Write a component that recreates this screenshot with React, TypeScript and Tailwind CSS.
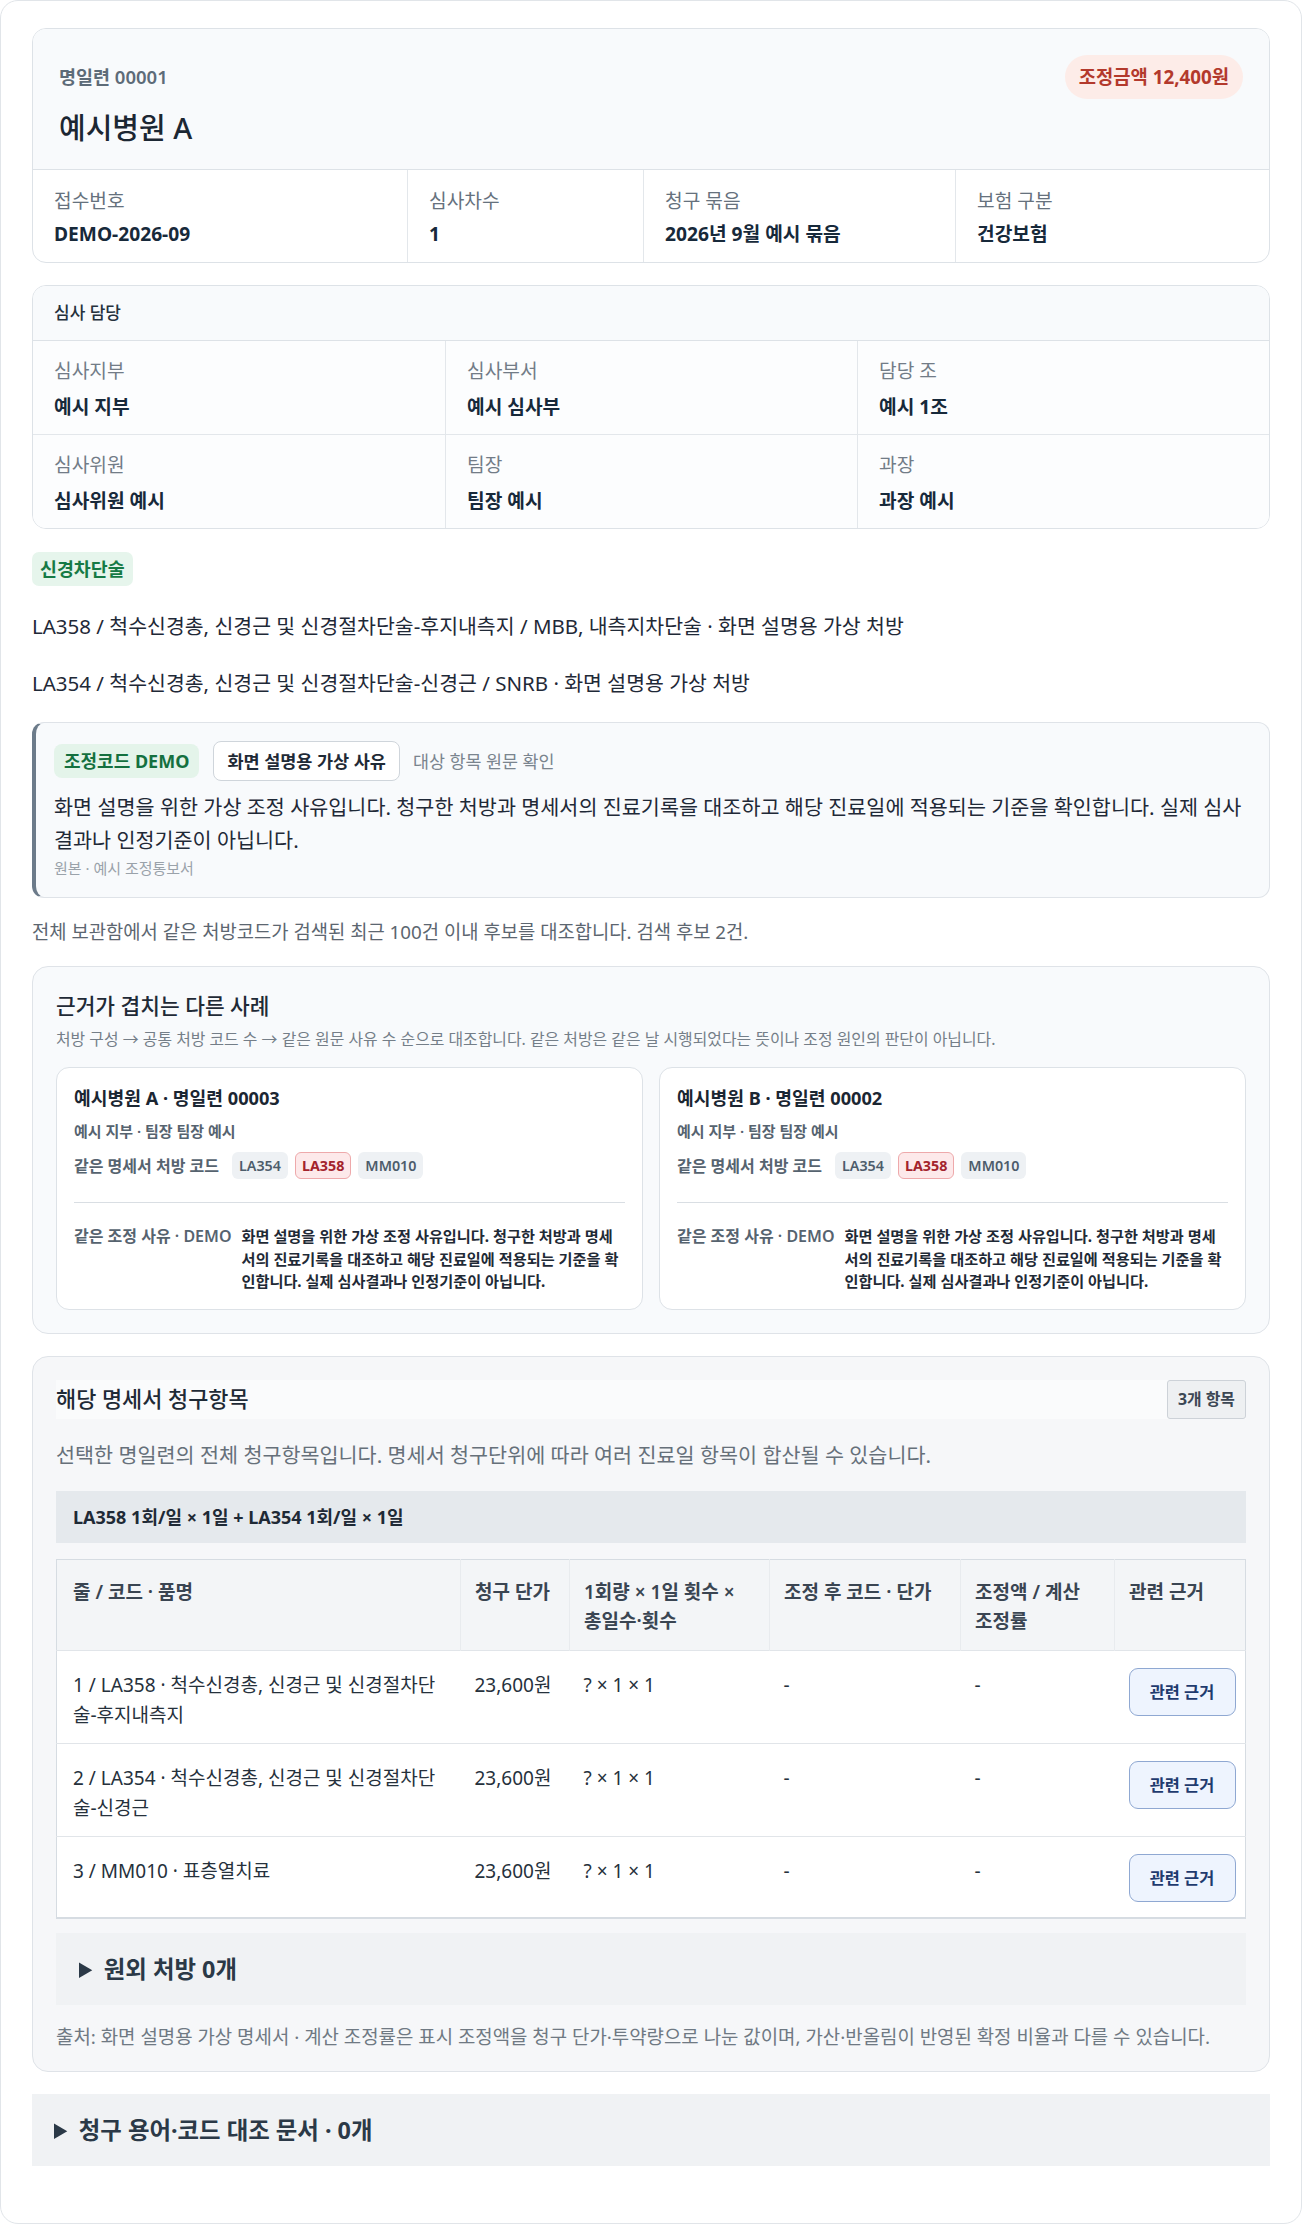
const FONT = "font-['Noto_Sans','Noto_Sans_CJK_KR',sans-serif]";

const claimInfo = [
  { label: "접수번호", value: "DEMO-2026-09" },
  { label: "심사차수", value: "1" },
  { label: "청구 묶음", value: "2026년 9월 예시 묶음" },
  { label: "보험 구분", value: "건강보험" },
];

const reviewers = [
  { label: "심사지부", value: "예시 지부" },
  { label: "심사부서", value: "예시 심사부" },
  { label: "담당 조", value: "예시 1조" },
  { label: "심사위원", value: "심사위원 예시" },
  { label: "팀장", value: "팀장 예시" },
  { label: "과장", value: "과장 예시" },
];

const similarCases = [
  { title: "예시병원 A · 명일련 00003", sub: "예시 지부 · 팀장 팀장 예시" },
  { title: "예시병원 B · 명일련 00002", sub: "예시 지부 · 팀장 팀장 예시" },
];

const reasonText =
  "화면 설명을 위한 가상 조정 사유입니다. 청구한 처방과 명세서의 진료기록을 대조하고 해당 진료일에 적용되는 기준을 확인합니다. 실제 심사결과나 인정기준이 아닙니다.";

const rows = [
  { name: "1 / LA358 · 척수신경총, 신경근 및 신경절차단술-후지내측지", price: "23,600원" },
  { name: "2 / LA354 · 척수신경총, 신경근 및 신경절차단술-신경근", price: "23,600원" },
  { name: "3 / MM010 · 표층열치료", price: "23,600원" },
];

const headers = ["줄 / 코드 · 품명", "청구 단가", "1회량 × 1일 횟수 × 총일수·횟수", "조정 후 코드 · 단가", "조정액 / 계산 조정률", "관련 근거"];

function CodeChip({ code, hit }: { code: string; hit?: boolean }) {
  return hit ? (
    <span className="flex h-[27px] items-center rounded-md border border-[#eea9ab] bg-[#fde9ea] px-[6px] text-[14.3px] font-bold text-[#a3232c]">
      {code}
    </span>
  ) : (
    <span className="flex h-[27px] items-center rounded-md border border-transparent bg-[#eef1f4] px-[6px] text-[14.3px] font-semibold text-[#4d5c6b]">
      {code}
    </span>
  );
}

export default function App() {
  return (
    <div className={`${FONT} min-h-[2225px] bg-white text-[#1f2937]`}>
      <div className="rounded-[18px] border border-[#e1e5e9] bg-white px-[31px] pb-[57px] pt-[27px]">
        {/* 명일련 헤더 */}
        <section className="overflow-hidden rounded-[14px] border border-[#dde2e7]">
          <div className="bg-[#f8fafc] px-[26px] pb-[24px] pt-[26px]">
            <div className="flex items-center justify-between">
              <span className="text-[18.5px] font-semibold text-[#5d6b78]">명일련 00001</span>
              <span className="flex h-[44px] items-center rounded-full bg-[#fdece8] px-[14px] text-[18.8px] font-bold text-[#b3392c]">
                조정금액 12,400원
              </span>
            </div>
            <h1 className="mt-[12px] text-[29px] font-medium leading-[34px] text-[#1c2733]">예시병원 A</h1>
          </div>
          <div className="grid grid-cols-[374px_236px_312px_1fr] border-t border-[#dde2e7]">
            {claimInfo.map((c, i) => (
              <div
                key={c.label}
                className={`px-[21px] pb-[16px] pt-[19px] ${i > 0 ? "border-l border-[#e3e7eb]" : ""}`}
              >
                <div className="text-[19.2px] leading-[24px] text-[#66717d]">{c.label}</div>
                <div className="mt-[9px] text-[19.2px] font-bold leading-[24px] text-[#17293a]">{c.value}</div>
              </div>
            ))}
          </div>
        </section>

        {/* 심사 담당 */}
        <section className="mt-[22px] overflow-hidden rounded-[14px] border border-[#dde2e7]">
          <div className="border-b border-[#dde2e7] bg-[#f8fafc] px-[21px] py-[15px] text-[17px] font-medium leading-[24px] text-[#25313d]">
            심사 담당
          </div>
          <div className="grid grid-cols-3 bg-[#fcfdfe]">
            {reviewers.map((r, i) => (
              <div
                key={r.label}
                className={`px-[21px] pb-[15px] pt-[18px] ${i % 3 > 0 ? "border-l border-[#e3e7eb]" : ""} ${
                  i > 2 ? "border-t border-[#e3e7eb]" : ""
                }`}
              >
                <div className="text-[19.2px] leading-[24px] text-[#727c87]">{r.label}</div>
                <div className="mt-[12px] text-[19.2px] font-bold leading-[24px] text-[#17293a]">{r.value}</div>
              </div>
            ))}
          </div>
        </section>

        {/* 처방 분류 */}
        <div className="mt-[23px] flex">
          <span className="flex h-[34px] items-center rounded-[7px] bg-[#e6f5ec] px-[8px] text-[18.4px] font-bold text-[#167a45]">
            신경차단술
          </span>
        </div>
        <p className="mt-[26px] text-[20.5px] leading-[28px] text-[#1f2937]">
          LA358 / 척수신경총, 신경근 및 신경절차단술-후지내측지 / MBB, 내측지차단술 · 화면 설명용 가상 처방
        </p>
        <p className="mt-[29px] text-[20.5px] leading-[28px] text-[#1f2937]">
          LA354 / 척수신경총, 신경근 및 신경절차단술-신경근 / SNRB · 화면 설명용 가상 처방
        </p>

        {/* 조정 사유 */}
        <section className="mt-[25px] rounded-[12px] border border-l-4 border-[#dfe3e8] border-l-[#6c7b8a] bg-[#f8fafc] pb-[19px] pl-[18px] pr-[16px] pt-[18px]">
          <div className="flex items-center">
            <span className="flex h-[34px] items-center rounded-[8px] bg-[#e4f4ea] px-[10px] text-[18px] font-bold text-[#14703f]">
              조정코드 DEMO
            </span>
            <span className="ml-[14px] flex h-[40px] items-center rounded-[8px] border border-[#cfd5db] bg-white px-[13px] text-[17.5px] font-bold text-[#1f2a36]">
              화면 설명용 가상 사유
            </span>
            <span className="ml-[13px] text-[17.4px] text-[#7a848e]">대상 항목 원문 확인</span>
          </div>
          <p className="mt-[10px] text-[20.7px] leading-[33px] text-[#1f2937]">{reasonText}</p>
          <p className="mt-[1px] text-[15px] leading-[20px] text-[#9aa2aa]">원본 · 예시 조정통보서</p>
        </section>

        <p className="mt-[21px] text-[18.8px] leading-[26px] text-[#5c6670]">
          전체 보관함에서 같은 처방코드가 검색된 최근 100건 이내 후보를 대조합니다. 검색 후보 2건.
        </p>

        {/* 근거가 겹치는 다른 사례 */}
        <section className="mt-[21px] rounded-[16px] border border-[#dfe3e8] bg-[#f8fafc] px-[23px] pb-[23px] pt-[24px]">
          <h2 className="text-[21.4px] font-medium leading-[30px] text-[#1f2a36]">근거가 겹치는 다른 사례</h2>
          <p className="mt-[7px] text-[15.9px] leading-[22px] text-[#747e88]">
            처방 구성 → 공통 처방 코드 수 → 같은 원문 사유 수 순으로 대조합니다. 같은 처방은 같은 날 시행되었다는 뜻이나 조정
            원인의 판단이 아닙니다.
          </p>
          <div className="mt-[17px] grid grid-cols-2 gap-[16px]">
            {similarCases.map((c) => (
              <div key={c.title} className="rounded-[13px] border border-[#dde2e7] bg-white px-[17px] pb-[16px] pt-[18px]">
                <div className="text-[18.2px] font-bold leading-[24px] text-[#1b2632]">{c.title}</div>
                <div className="mt-[10px] text-[15px] font-semibold leading-[22px] text-[#56636f]">{c.sub}</div>
                <div className="mt-[10px] flex items-center gap-[7px]">
                  <span className="mr-[6px] text-[16px] font-semibold text-[#56636f]">같은 명세서 처방 코드</span>
                  <CodeChip code="LA354" />
                  <CodeChip code="LA358" hit />
                  <CodeChip code="MM010" />
                </div>
                <div className="mt-[23px] flex gap-[10px] border-t border-[#d9dee3] pt-[22px]">
                  <span className="shrink-0 text-[16px] font-semibold leading-[22.5px] text-[#56636f]">같은 조정 사유 · DEMO</span>
                  <span className="text-[15.2px] font-bold leading-[22.5px] text-[#1f2a36]">{reasonText}</span>
                </div>
              </div>
            ))}
          </div>
        </section>

        {/* 해당 명세서 청구항목 */}
        <section className="mt-[22px] rounded-[16px] border border-[#dfe3e8] bg-[#f6f7f9] px-[23px] pb-[21px] pt-[23px]">
          <div className="flex items-stretch justify-between bg-[#fafbfc]">
            <h2 className="self-center text-[21.9px] font-medium leading-[28px] text-[#1f2a36]">해당 명세서 청구항목</h2>
            <span className="flex items-center rounded-[3px] border border-[#cdd2d8] bg-[#eef0f2] px-[10px] text-[15.9px] font-bold leading-[37px] text-[#3c4754]">
              3개 항목
            </span>
          </div>
          <p className="mt-[22px] text-[20.7px] leading-[28px] text-[#66707a]">
            선택한 명일련의 전체 청구항목입니다. 명세서 청구단위에 따라 여러 진료일 항목이 합산될 수 있습니다.
          </p>
          <div className="mt-[22px] bg-[#e5e9ed] px-[17px] py-[14px] text-[18px] font-bold leading-[24px] text-[#1f2a36]">
            LA358 1회/일 × 1일 + LA354 1회/일 × 1일
          </div>
          <table className="mt-[16px] w-full table-fixed border-collapse border border-b-2 border-[#d6dce2] bg-white">
            <colgroup>
              <col className="w-[404px]" />
              <col className="w-[109px]" />
              <col className="w-[200px]" />
              <col className="w-[191px]" />
              <col className="w-[154px]" />
              <col />
            </colgroup>
            <thead>
              <tr className="bg-[#f3f5f7] text-left align-top">
                {headers.map((h, i) => (
                  <th
                    key={h}
                    className={`break-keep px-[14px] pb-[14px] pt-[18px] text-[19px] font-semibold leading-[29px] text-[#3a4552] ${
                      i === 0 ? "pl-[16px]" : ""
                    } ${i < 5 ? "border-r border-[#e8ebee]" : ""}`}
                  >
                    {h}
                  </th>
                ))}
              </tr>
            </thead>
            <tbody>
              {rows.map((r) => (
                <tr key={r.name} className="border-t border-[#e1e5e9] align-top text-[19px] leading-[30px] text-[#26313c]">
                  <td className="pb-[13px] pl-[16px] pr-[14px] pt-[19px]">{r.name}</td>
                  <td className="px-[14px] pb-[13px] pt-[19px]">{r.price}</td>
                  <td className="px-[14px] pb-[13px] pt-[19px]">? × 1 × 1</td>
                  <td className="px-[14px] pb-[13px] pt-[19px]">-</td>
                  <td className="px-[14px] pb-[13px] pt-[19px]">-</td>
                  <td className="px-[14px] pb-[15px] pt-[17px]">
                    <button
                      type="button"
                      className="h-[48px] w-[107px] rounded-[9px] border border-[#8fa8d2] bg-[#eef4fe] text-[16.4px] font-bold text-[#1f3b6e]"
                    >
                      관련 근거
                    </button>
                  </td>
                </tr>
              ))}
            </tbody>
          </table>
          <details className="mt-[14px] bg-[#f0f2f4] px-[23px] py-[18px]">
            <summary className="cursor-pointer text-[23.4px] font-bold leading-[36px] text-[#2b3947]">원외 처방 0개</summary>
          </details>
          <p className="mt-[19px] text-[18.9px] leading-[26px] text-[#6f7983]">
            출처: 화면 설명용 가상 명세서 · 계산 조정률은 표시 조정액을 청구 단가·투약량으로 나눈 값이며, 가산·반올림이 반영된
            확정 비율과 다를 수 있습니다.
          </p>
        </section>

        <details className="mt-[22px] bg-[#f0f2f4] px-[22px] py-[18px]">
          <summary className="cursor-pointer text-[23.4px] font-bold leading-[36px] text-[#2b3947]">
            청구 용어·코드 대조 문서 · 0개
          </summary>
        </details>
      </div>
    </div>
  );
}
